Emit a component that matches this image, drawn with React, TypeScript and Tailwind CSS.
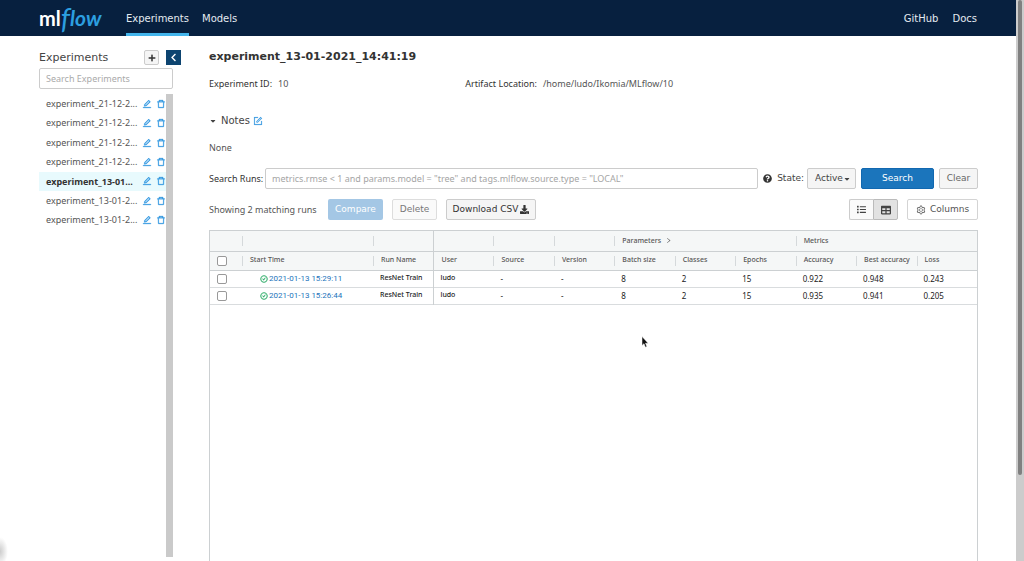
import { clsx } from 'clsx'
import { AiOutlineCheckCircle, AiOutlineDelete, AiOutlineEdit, AiOutlineForm, AiOutlineRight, AiOutlineSetting } from 'react-icons/ai'
import { FaCaretDown, FaChevronLeft, FaDownload, FaList, FaPlus, FaQuestionCircle, FaTable } from 'react-icons/fa'

const experiments = [
  { id: 1, label: 'experiment_21-12-2...' },
  { id: 2, label: 'experiment_21-12-2...' },
  { id: 3, label: 'experiment_21-12-2...' },
  { id: 4, label: 'experiment_21-12-2...' },
  { id: 5, label: 'experiment_13-01...', active: true },
  { id: 6, label: 'experiment_13-01-2...' },
  { id: 7, label: 'experiment_13-01-2...' },
]

const columns = ['User', 'Source', 'Version', 'Batch size', 'Classes', 'Epochs', 'Accuracy', 'Best accuracy', 'Loss']

const runs = [
  { start: '2021-01-13 15:29:11', name: 'ResNet Train', values: ['ludo', '-', '-', '8', '2', '15', '0.922', '0.948', '0.243'] },
  { start: '2021-01-13 15:26:44', name: 'ResNet Train', values: ['ludo', '-', '-', '8', '2', '15', '0.935', '0.941', '0.205'] },
]

function Header() {
  return (
    <header className="flex h-9 items-center bg-[#07203f] px-[39px] text-[10px] text-[#e4eaf0]">
      <a href="#home" aria-label="mlflow" className="flex h-9 w-[68px] shrink-0 items-center font-['Lato',sans-serif] text-[20px] leading-9">
        <span className="font-bold text-white">ml</span>
        <span className="text-[29px] italic text-[#2c9fe0]">f</span>
        <span className="text-[21px] font-bold italic text-[#2c9fe0]">low</span>
      </a>
      <nav className="ml-[19px] flex h-full flex-1 gap-[13px]">
        <a href="#experiments" className="flex items-center border-b-3 border-[#43b5ec] pt-1">Experiments</a>
        <a href="#models" className="flex items-center border-b-3 border-transparent pt-1">Models</a>
      </nav>
      <nav className="flex gap-[14px] pt-px">
        <a href="#github">GitHub</a>
        <a href="#docs">Docs</a>
      </nav>
    </header>
  )
}

function Sidebar() {
  return (
    <aside className="flex w-[142px] shrink-0 flex-col pt-[13px]">
      <div className="flex items-center">
        <h2 className="flex-1 pt-px text-[11px] leading-4 text-[#444]">Experiments</h2>
        <button aria-label="New experiment" className="flex h-[15px] w-[15px] items-center justify-center rounded-xs border border-[#ccc] bg-[#f5f5f5] text-[#333]">
          <FaPlus className="h-2 w-2" />
        </button>
        <button aria-label="Collapse sidebar" className="ml-[7px] flex h-[15px] w-[15px] items-center justify-center bg-[#0d4470] text-white">
          <FaChevronLeft className="h-[9px] w-[9px]" />
        </button>
      </div>
      <input
        type="text"
        aria-label="Search Experiments"
        placeholder="Search Experiments"
        className="mt-0.5 mr-2 h-[21px] rounded-xs border border-[#ccc] px-1.5 font-['Noto_Sans',sans-serif] text-[9px] placeholder:text-[#aaa]"
      />
      <div className="mt-[5px] mr-2 mb-1 flex min-h-0 flex-1">
        <ul className="flex h-[136px] min-w-0 flex-1 flex-col font-['Noto_Sans',sans-serif] text-[9px]">
          {experiments.map((e) => (
            <li key={e.id} className={clsx('flex flex-1 items-center pl-[7px]', e.active ? 'bg-[#e8fafd] font-bold text-[#333]' : 'text-[#555]')}>
              <a href="#experiment" className="w-24 shrink-0 whitespace-nowrap">{e.label}</a>
              <button aria-label="Rename experiment" className="text-[#2b94e0]"><AiOutlineEdit className="h-[10px] w-[10px] stroke-[30]" /></button>
              <button aria-label="Delete experiment" className="ml-1 text-[#2b94e0]"><AiOutlineDelete className="h-[10px] w-[10px] stroke-[30]" /></button>
            </li>
          ))}
        </ul>
        <div className="w-[7px] bg-[#cacaca]" />
      </div>
    </aside>
  )
}

function RunSearch() {
  return (
    <form className="mt-3 flex items-center text-[9px] text-[#444]">
      <label htmlFor="query" className="w-14 font-['Noto_Sans',sans-serif] whitespace-nowrap text-[#333]">Search Runs:</label>
      <input
        id="query"
        type="text"
        placeholder={'metrics.rmse < 1 and params.model = "tree" and tags.mlflow.source.type = "LOCAL"'}
        className="h-[21px] min-w-0 flex-1 rounded-xs border border-[#ccc] px-1.5 font-['Noto_Sans',sans-serif] placeholder:text-[#a5a5a5]"
      />
      <FaQuestionCircle className="ml-[5px] h-[9px] w-[9px] text-[#333]" />
      <label htmlFor="state" className="ml-[5px]">State:</label>
      <div className="relative ml-[3px]">
        <select id="state" className="h-[21px] w-[49px] appearance-none rounded-xs border border-[#ccc] bg-[#f5f5f5] pl-[7px]">
          <option>Active</option>
        </select>
        <FaCaretDown className="pointer-events-none absolute top-[7px] right-[5px] h-2 w-2" />
      </div>
      <button type="button" className="ml-[5px] h-[21px] w-[73px] rounded-xs border border-[#1268b0] bg-[#1b75bc] text-white">Search</button>
      <button type="button" className="ml-[5px] h-[21px] w-[39px] rounded-xs border border-[#ccc] bg-[#f5f5f5] text-[#666]">Clear</button>
    </form>
  )
}

function Actions() {
  return (
    <div className="mt-[10px] flex items-center text-[9px] text-[#444]">
      <span className="w-[119px] font-['Noto_Sans',sans-serif] whitespace-nowrap text-[#555]">Showing 2 matching runs</span>
      <button disabled className="h-[21px] w-[55px] rounded-xs bg-[#a4c7e5] text-white">Compare</button>
      <button disabled className="ml-[9px] h-[21px] w-[45px] rounded-xs border border-[#ddd] bg-[#fafafa] text-[#777]">Delete</button>
      <button className="ml-[9px] flex h-[21px] w-[90px] items-center justify-center gap-0.5 rounded-xs border border-[#ccc] bg-[#f5f5f5] text-[#333]">
        Download CSV <FaDownload className="h-[9px] w-[9px]" />
      </button>
      <div className="flex-1" />
      <button aria-label="List view" className="flex h-[21px] w-6 items-center justify-center rounded-l-xs border border-r-0 border-[#ccc] bg-[#fafafa]">
        <FaList className="h-[9px] w-[9px]" />
      </button>
      <button aria-label="Table view" className="flex h-[21px] w-[25px] items-center justify-center rounded-r-xs border border-[#bbb] bg-[#e2e2e2]">
        <FaTable className="h-[10px] w-[10px]" />
      </button>
      <button className="ml-[9px] flex h-[21px] w-[71px] items-center justify-center gap-1 rounded-xs border border-[#d4d4d4] text-[#555]">
        <AiOutlineSetting className="h-[10px] w-[10px]" /> Columns
      </button>
    </div>
  )
}

// Column title with the short resize mark on its left
function Title({ children, mark = true }: { children?: React.ReactNode; mark?: boolean }) {
  return (
    <div className={clsx('flex h-[10px] items-center border-l pl-[7px]', mark ? 'border-[#d5d9db]' : 'border-transparent')}>
      {children}
    </div>
  )
}

function RunsTable() {
  return (
    <div className="mt-[10px] flex-1 border border-b-0 border-[#ccd0d2] font-['Noto_Sans',sans-serif] text-[7px]">
      <table className="w-full table-fixed border-collapse text-left whitespace-nowrap">
        <colgroup>
          <col className="w-8" />
          <col className="w-[131px]" />
          <col className="w-[60px]" />
          {columns.map((c) => <col key={c} />)}
        </colgroup>
        <thead className="bg-[#f5f7f7] text-[#555]">
          <tr className="h-5 border-b border-[#ccd0d2]">
            <td />
            <td><Title /></td>
            <td><Title /></td>
            <td className="border-l border-[#ccd0d2]" />
            <td><Title /></td>
            <td><Title /></td>
            <th colSpan={3} className="font-medium">
              <Title>Parameters <AiOutlineRight className="ml-1 h-[7px] w-[7px]" /></Title>
            </th>
            <th colSpan={3} className="font-medium"><Title>Metrics</Title></th>
          </tr>
          <tr className="h-[19px] border-b border-[#ccd0d2]">
            <th className="pl-[7px]">
              <input type="checkbox" aria-label="Select all runs" className="block h-[10px] w-[10px] appearance-none rounded-xs border border-[#999] bg-white" />
            </th>
            <th className="font-medium"><Title>Start Time</Title></th>
            <th className="font-medium"><Title>Run Name</Title></th>
            {columns.map((c, i) => (
              <th key={c} className={clsx('font-medium', i === 0 && 'border-l border-[#ccd0d2]')}>
                <Title mark={i > 0}>{c}</Title>
              </th>
            ))}
          </tr>
        </thead>
        <tbody className="text-[#222]">
          {runs.map((run) => (
            <tr key={run.start} className="h-[17px] border-b border-[#d9dcde]">
              <td className="pl-[7px]">
                <input type="checkbox" aria-label={`Select run ${run.start}`} className="block h-[10px] w-[10px] appearance-none rounded-xs border border-[#999] bg-white" />
              </td>
              <td className="pl-[18px]">
                <a href="#run" className="flex items-center gap-px font-['Roboto',sans-serif] text-[8px] text-[#2374bb]">
                  <AiOutlineCheckCircle className="h-2 w-2 stroke-[40] text-[#22a860]" /> {run.start}
                </a>
              </td>
              <td className="pl-[7px] font-medium">{run.name}</td>
              {run.values.map((v, i) => (
                <td key={columns[i]} className={clsx('pl-[7px]', i === 0 ? 'border-l border-[#ccd0d2] font-medium' : 'text-[8px]')}>{v}</td>
              ))}
            </tr>
          ))}
        </tbody>
      </table>
    </div>
  )
}

export default function App() {
  return (
    <div className="relative flex h-screen overflow-hidden bg-white font-['DejaVu_Sans',sans-serif]">
      <div className="flex min-w-0 flex-1 flex-col">
        <Header />
        <div className="flex min-h-0 flex-1 gap-7 pr-[38px] pl-[39px]">
          <Sidebar />
          <main className="flex min-w-0 flex-1 flex-col pt-[13px]">
            <h1 className="text-[11px] leading-4 font-bold text-[#333]">experiment_13-01-2021_14:41:19</h1>
            <dl className="mt-[11px] grid grid-cols-3 font-['Noto_Sans',sans-serif] text-[9px] leading-4 text-[#555]">
              <div className="flex gap-1.5"><dt className="text-[#333]">Experiment ID:</dt><dd>10</dd></div>
              <div className="flex gap-1.5 whitespace-nowrap"><dt className="text-[#333]">Artifact Location:</dt><dd>/home/ludo/Ikomia/MLflow/10</dd></div>
            </dl>
            <div className="mt-[21px] flex items-center text-[10px] leading-4 text-[#444]">
              <button className="flex items-center gap-1"><FaCaretDown className="h-2 w-2" /> Notes</button>
              <button aria-label="Edit notes" className="ml-[3px] text-[#2b94e0]"><AiOutlineForm className="h-[10px] w-[10px] stroke-[20]" /></button>
            </div>
            <p className="mt-[11px] font-['Noto_Sans',sans-serif] text-[9px] leading-4 text-[#555]">None</p>
            <RunSearch />
            <Actions />
            <RunsTable />
          </main>
        </div>
      </div>
      <div className="w-2 bg-[#ccc] px-0.5">
        <div className="h-[475px] rounded-full bg-[#808080]" />
      </div>

      <div className="absolute bottom-0 left-0 h-6 w-2 bg-radial-[at_0%_60%] from-[#ccc] to-transparent to-70%" />
      <svg className="absolute top-[336px] left-[641px] h-3 w-2" viewBox="0 0 8 12" aria-hidden>
        <path d="M1 0.5v9l2-1.8 1.4 3.5 1.5-.7-1.4-3.3h2.7z" fill="#111" stroke="#fff" strokeWidth=".5" />
      </svg>
    </div>
  )
}
